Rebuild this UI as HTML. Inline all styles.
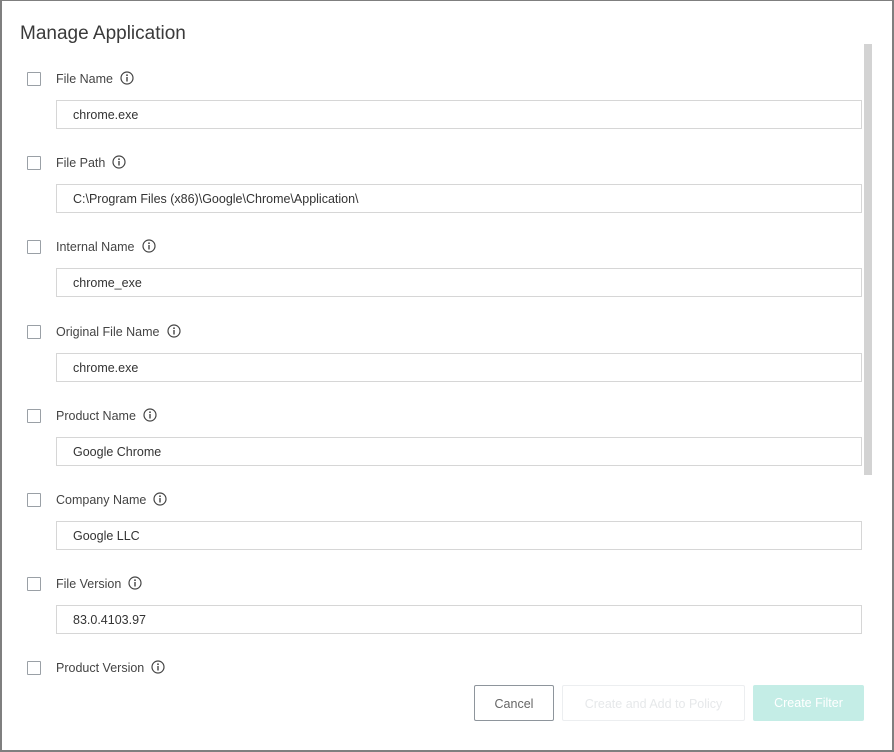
<!DOCTYPE html>
<html><head><meta charset="utf-8"><style>
*{box-sizing:border-box;margin:0;padding:0}
body{width:894px;height:752px;background:#fff;font-family:"Liberation Sans",Arial,sans-serif;position:relative;overflow:hidden}
.frame{position:absolute;left:0;top:0;width:894px;height:752px;border:2px solid #7f7f7f;border-top-width:1px}
h1{position:absolute;left:20px;top:23px;font-size:19px;font-weight:normal;color:#3a3a3a}
.cb{position:absolute;left:27px;width:14px;height:14px;border:1.5px solid #9aa0a6;border-radius:1px}
.lbl{position:absolute;left:56px;font-size:12.5px;color:#444}
.lbl svg{vertical-align:-2px;margin-left:7px}
.in{position:absolute;left:56px;width:806px;height:29px;border:1px solid #d6d6d6;font-size:12.5px;color:#333;padding-left:16px;line-height:28px}
.sb{position:absolute;left:864px;top:44px;width:8px;height:431px;background:#d3d3d3}
.btn{position:absolute;top:685px;height:36px;border-radius:2px;font-size:12.5px;text-align:center;line-height:36px}
</style></head><body>
<div class="frame"></div>
<h1>Manage Application</h1>
<div class="sb"></div>

<div class="cb" style="top:72px"></div><div class="lbl" style="top:71px">File Name<svg width="14" height="14" viewBox="0 0 14 14"><circle cx="7" cy="7" r="6" fill="none" stroke="#444" stroke-width="1.2"/><circle cx="7" cy="4.2" r=".9" fill="#444"/><path d="M7 6v4.5" stroke="#444" stroke-width="1.4"/></svg></div>
<div class="in" style="top:100px">chrome.exe</div>

<div class="cb" style="top:156px"></div><div class="lbl" style="top:155px">File Path<svg width="14" height="14" viewBox="0 0 14 14"><circle cx="7" cy="7" r="6" fill="none" stroke="#444" stroke-width="1.2"/><circle cx="7" cy="4.2" r=".9" fill="#444"/><path d="M7 6v4.5" stroke="#444" stroke-width="1.4"/></svg></div>
<div class="in" style="top:184px">C:\Program Files (x86)\Google\Chrome\Application\</div>

<div class="cb" style="top:240px"></div><div class="lbl" style="top:239px">Internal Name<svg width="14" height="14" viewBox="0 0 14 14"><circle cx="7" cy="7" r="6" fill="none" stroke="#444" stroke-width="1.2"/><circle cx="7" cy="4.2" r=".9" fill="#444"/><path d="M7 6v4.5" stroke="#444" stroke-width="1.4"/></svg></div>
<div class="in" style="top:268px">chrome_exe</div>

<div class="cb" style="top:325px"></div><div class="lbl" style="top:324px">Original File Name<svg width="14" height="14" viewBox="0 0 14 14"><circle cx="7" cy="7" r="6" fill="none" stroke="#444" stroke-width="1.2"/><circle cx="7" cy="4.2" r=".9" fill="#444"/><path d="M7 6v4.5" stroke="#444" stroke-width="1.4"/></svg></div>
<div class="in" style="top:353px">chrome.exe</div>

<div class="cb" style="top:409px"></div><div class="lbl" style="top:408px">Product Name<svg width="14" height="14" viewBox="0 0 14 14"><circle cx="7" cy="7" r="6" fill="none" stroke="#444" stroke-width="1.2"/><circle cx="7" cy="4.2" r=".9" fill="#444"/><path d="M7 6v4.5" stroke="#444" stroke-width="1.4"/></svg></div>
<div class="in" style="top:437px">Google Chrome</div>

<div class="cb" style="top:493px"></div><div class="lbl" style="top:492px">Company Name<svg width="14" height="14" viewBox="0 0 14 14"><circle cx="7" cy="7" r="6" fill="none" stroke="#444" stroke-width="1.2"/><circle cx="7" cy="4.2" r=".9" fill="#444"/><path d="M7 6v4.5" stroke="#444" stroke-width="1.4"/></svg></div>
<div class="in" style="top:521px">Google LLC</div>

<div class="cb" style="top:577px"></div><div class="lbl" style="top:576px">File Version<svg width="14" height="14" viewBox="0 0 14 14"><circle cx="7" cy="7" r="6" fill="none" stroke="#444" stroke-width="1.2"/><circle cx="7" cy="4.2" r=".9" fill="#444"/><path d="M7 6v4.5" stroke="#444" stroke-width="1.4"/></svg></div>
<div class="in" style="top:605px">83.0.4103.97</div>

<div class="cb" style="top:661px"></div><div class="lbl" style="top:660px">Product Version<svg width="14" height="14" viewBox="0 0 14 14"><circle cx="7" cy="7" r="6" fill="none" stroke="#444" stroke-width="1.2"/><circle cx="7" cy="4.2" r=".9" fill="#444"/><path d="M7 6v4.5" stroke="#444" stroke-width="1.4"/></svg></div>

<div class="btn" style="left:474px;width:80px;border:1px solid #8e959c;color:#666">Cancel</div>
<div class="btn" style="left:562px;width:183px;border:1px solid #eceef0;color:#e6e8ea">Create and Add to Policy</div>
<div class="btn" style="left:753px;width:111px;background:#c4ede6;color:#fff">Create Filter</div>
</body></html>
